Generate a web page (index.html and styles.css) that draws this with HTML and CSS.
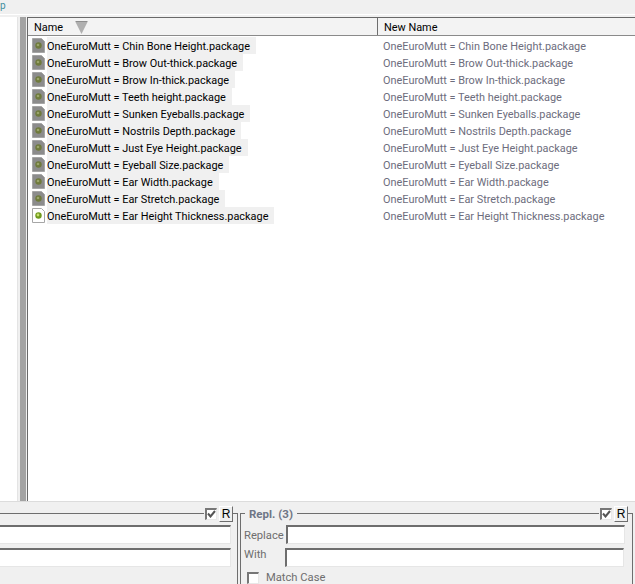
FILE: index.html
```html
<!DOCTYPE html>
<html lang="en">
<head>
    <meta charset="UTF-8">
    <title>Bulk Rename</title>
    <link rel="stylesheet" href="styles.css">
</head>
<body>
    <svg class="defs" width="0" height="0">
        <symbol id="doc" viewBox="0 0 13 15">
            <path d="M.5.5h9l3 3v11H.5z" fill="#8c8c8c" stroke="#a6a6a6"/>
            <circle cx="6.5" cy="7.5" r="3.2" fill="#6f7a3c"/>
            <circle cx="6" cy="7" r="1.3" fill="#9aa56a"/>
        </symbol>
        <symbol id="doc-active" viewBox="0 0 13 15">
            <path d="M.5.5h9l3 3v11H.5z" fill="#fff" stroke="#a6a6a6"/>
            <circle cx="6.5" cy="7.5" r="3.2" fill="#6f9a1c"/>
            <circle cx="6" cy="7" r="1.4" fill="#c8e070"/>
        </symbol>
    </svg>
    <div class="app">
        <div class="menubar"><span class="menu-item">p</span></div>
        <div class="main">
            <div class="tree"></div>
            <div class="splitter"></div>
            <div class="list">
                <div class="list-head">
                    <div class="head-cell head-name">
                        Name
                        <svg class="sort-arrow" width="13" height="13" viewBox="0 0 13 13"><path d="M0 0h13L6.5 13z" fill="#b0b0b0"/><path d="M1 .5h11" stroke="#8e8e8e"/></svg>
                    </div>
                    <div class="head-cell">New Name</div>
                </div>
                <div class="rows">
                    <div class="row"><div class="name"><svg class="icon"><use href="#doc"/></svg><span class="label">OneEuroMutt = Chin Bone Height.package</span></div><div class="new-name">OneEuroMutt = Chin Bone Height.package</div></div>
                    <div class="row"><div class="name"><svg class="icon"><use href="#doc"/></svg><span class="label">OneEuroMutt = Brow Out-thick.package</span></div><div class="new-name">OneEuroMutt = Brow Out-thick.package</div></div>
                    <div class="row"><div class="name"><svg class="icon"><use href="#doc"/></svg><span class="label">OneEuroMutt = Brow In-thick.package</span></div><div class="new-name">OneEuroMutt = Brow In-thick.package</div></div>
                    <div class="row"><div class="name"><svg class="icon"><use href="#doc"/></svg><span class="label">OneEuroMutt = Teeth height.package</span></div><div class="new-name">OneEuroMutt = Teeth height.package</div></div>
                    <div class="row"><div class="name"><svg class="icon"><use href="#doc"/></svg><span class="label">OneEuroMutt = Sunken Eyeballs.package</span></div><div class="new-name">OneEuroMutt = Sunken Eyeballs.package</div></div>
                    <div class="row"><div class="name"><svg class="icon"><use href="#doc"/></svg><span class="label">OneEuroMutt = Nostrils Depth.package</span></div><div class="new-name">OneEuroMutt = Nostrils Depth.package</div></div>
                    <div class="row"><div class="name"><svg class="icon"><use href="#doc"/></svg><span class="label">OneEuroMutt = Just Eye Height.package</span></div><div class="new-name">OneEuroMutt = Just Eye Height.package</div></div>
                    <div class="row"><div class="name"><svg class="icon"><use href="#doc"/></svg><span class="label">OneEuroMutt = Eyeball Size.package</span></div><div class="new-name">OneEuroMutt = Eyeball Size.package</div></div>
                    <div class="row"><div class="name"><svg class="icon"><use href="#doc"/></svg><span class="label">OneEuroMutt = Ear Width.package</span></div><div class="new-name">OneEuroMutt = Ear Width.package</div></div>
                    <div class="row"><div class="name"><svg class="icon"><use href="#doc"/></svg><span class="label">OneEuroMutt = Ear Stretch.package</span></div><div class="new-name">OneEuroMutt = Ear Stretch.package</div></div>
                    <div class="row"><div class="name"><svg class="icon"><use href="#doc-active"/></svg><span class="label">OneEuroMutt = Ear Height Thickness.package</span></div><div class="new-name">OneEuroMutt = Ear Height Thickness.package</div></div>
                </div>
            </div>
        </div>
        <div class="bottom">
            <div class="group group-left">
                <div class="group-head">
                    <div class="rule"></div>
                    <div class="check checked"><svg width="9" height="8" viewBox="0 0 9 8"><path d="M1 3.5l2.5 3L8 1" fill="none" stroke="#555" stroke-width="2"/></svg></div>
                    <div class="r-btn">R</div>
                    <div class="tail"></div>
                </div>
                <div class="group-body">
                    <div class="field"></div>
                    <div class="field"></div>
                </div>
            </div>
            <div class="group group-right">
                <div class="group-head">
                    <div class="lead"></div>
                    <div class="group-title">Repl. (3)</div>
                    <div class="rule"></div>
                    <div class="check checked"><svg width="9" height="8" viewBox="0 0 9 8"><path d="M1 3.5l2.5 3L8 1" fill="none" stroke="#555" stroke-width="2"/></svg></div>
                    <div class="r-btn">R</div>
                    <div class="tail"></div>
                </div>
                <div class="group-body">
                    <div class="form-row">
                        <span class="form-label label-replace">Replace</span>
                        <div class="field field-replace"></div>
                    </div>
                    <div class="form-row">
                        <span class="form-label label-with">With</span>
                        <div class="field field-with"></div>
                    </div>
                    <div class="match-row">
                        <div class="check"></div>
                        <span class="form-label">Match Case</span>
                    </div>
                </div>
            </div>
        </div>
    </div>
</body>
</html>
```

FILE: styles.css
```css
* {
    box-sizing: border-box;
    padding: 0;
    margin: 0;
}
body {
    font-family: Roboto, "Liberation Sans", sans-serif;
    font-size: 11px;
    color: #000;
    background: #f0f0f0;
    overflow: hidden;
}
.defs {
    display: block;
    height: 0;
}
.app {
    width: 635px;
    height: 584px;
    display: flex;
    flex-direction: column;
    overflow: hidden;
}
.menubar {
    height: 15px;
    background: #f0f0f0;
    border-bottom: 1px solid #fff;
}
.menu-item {
    display: block;
    line-height: 11px;
    color: #3f8f9f;
    font-size: 10px;
}
.main {
    flex: 1;
    display: flex;
    background: #f0f0f0;
    padding-top: 2px;
    border-bottom: 1px solid #dcdcdc;
}
.tree {
    width: 18px;
    background: #fff;
    border-right: 1px solid #e4e4e4;
}
.splitter {
    width: 6px;
    margin-left: 2px;
    background: #a3a3a3;
}
.list {
    flex: 1;
    margin-left: 1px;
    background: #fff;
    border-left: 1px solid #696969;
    border-top: 1px solid #696969;
}
.list-head {
    display: flex;
    height: 18px;
    background: #f3f3f3;
    border-bottom: 1px solid #8a8a8a;
}
.head-cell {
    display: flex;
    align-items: center;
    padding: 1px 0 0 6px;
    font-size: 10.9px;
    flex: 1;
}
.head-name {
    flex: 0 0 350px;
    border-right: 1px solid #6e6e6e;
}
.sort-arrow {
    margin-left: 12px;
}
.rows {
    padding: 1px 0 0 4px;
}
.row {
    display: flex;
    height: 17px;
    align-items: center;
}
.name {
    flex: 0 0 351px;
    display: flex;
    align-items: center;
}
.icon {
    width: 13px;
    height: 15px;
    flex: none;
    margin-right: 2px;
}
.label {
    background: #f0f0f0;
    padding: 2px 6px 0 0;
    line-height: 15px;
    font-size: 10.9px;
    white-space: nowrap;
}
.new-name {
    color: #6d6d7d;
    padding-top: 2px;
    font-size: 10.9px;
    line-height: 15px;
    white-space: nowrap;
}
.bottom {
    height: 82px;
    display: flex;
    padding-top: 4px;
    background: #f0f0f0;
}
.group-left {
    width: 238px;
}
.group-right {
    width: 393px;
    margin-left: 2px;
}
.group-head {
    display: flex;
    align-items: center;
    height: 15px;
}
.rule {
    flex: 1;
    height: 1px;
    background: #6e6e6e;
}
.lead {
    align-self: flex-end;
    width: 5px;
    height: 8px;
    border-top: 1px solid #6e6e6e;
    border-left: 1px solid #6e6e6e;
}
.group-title {
    padding: 0 4px;
    font-weight: bold;
    font-size: 11.5px;
    color: #6f7686;
}
.tail {
    align-self: flex-end;
    width: 5px;
    height: 8px;
    border-top: 1px solid #6e6e6e;
    border-right: 1px solid #6e6e6e;
}
.check {
    width: 12px;
    height: 12px;
    flex: none;
    display: flex;
    align-items: center;
    justify-content: center;
    background: #fff;
    border-style: solid;
    border-width: 2px 1px 1px 2px;
    border-color: #777 #e8e8e8 #e8e8e8 #777;
}
.checked {
    margin-left: 1px;
}
.r-btn {
    width: 14px;
    height: 16px;
    margin-left: 2px;
    flex: none;
    text-align: center;
    font-family: "Liberation Sans", sans-serif;
    line-height: 14px;
    font-size: 12px;
    background: #f0f0f0;
    border: 1px solid;
    border-color: #fff #6e6e6e #6e6e6e #fff;
}
.group-body {
    height: 63px;
    padding-top: 4px;
    display: flex;
    flex-direction: column;
}
.group-left .group-body {
    border-right: 1px solid #6e6e6e;
    padding-right: 6px;
    gap: 4px;
}
.group-right .group-body {
    border-left: 1px solid #6e6e6e;
    border-right: 1px solid #6e6e6e;
    padding: 4px 7px 0 3px;
    gap: 4px;
}
.field {
    height: 19px;
    background: #fff;
    border-style: solid;
    border-width: 2px 1px 1px 2px;
    border-color: #6e6e6e #e6e6e6 #e6e6e6 #6e6e6e;
}
.group-left .field {
    border-left: none;
}
.form-row {
    display: flex;
    align-items: flex-start;
    height: 19px;
}
.form-label {
    color: #6e6e6e;
    font-size: 11.2px;
    line-height: 14px;
}
.label-replace {
    flex: 0 0 42px;
    padding-top: 4px;
}
.label-with {
    flex: 0 0 41px;
}
.field-replace {
    flex: 1;
}
.field-with {
    flex: 1;
    margin-right: 1px;
}
.match-row {
    display: flex;
    align-items: center;
    gap: 7px;
    padding-left: 3px;
}
```
